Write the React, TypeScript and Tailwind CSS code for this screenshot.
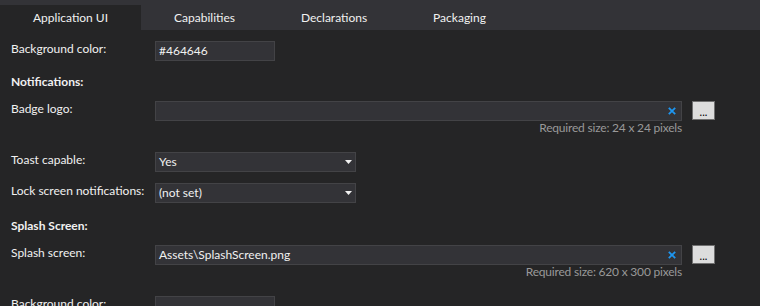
import React from 'react';

const tabs = ['Application UI', 'Capabilities', 'Declarations', 'Packaging'];

const ClearIcon = () => (
  <svg width="8" height="8" viewBox="0 0 8 8" className="shrink-0 mr-[1px]">
    <path d="M0.8 0.8 L7.2 7.2 M7.2 0.8 L0.8 7.2" stroke="#1e96f0" strokeWidth="1.8" />
  </svg>
);

const Caret = () => (
  <svg width="7" height="4" viewBox="0 0 7 4" className="shrink-0">
    <path d="M0 0 H7 L3.5 4 Z" fill="#f1f1f1" />
  </svg>
);

const Label: React.FC<{ children: React.ReactNode }> = ({ children }) => (
  <div className="w-[144px] shrink-0 leading-4">{children}</div>
);

const FileRow: React.FC<{ label: string; value?: string; hint: string }> = ({ label, value, hint }) => (
  <div className="flex flex-col">
    <div className="flex items-start">
      <Label>{label}</Label>
      <div className="flex items-center w-[527px] h-[20px] bg-[#333337] border border-[#434346] pl-[3px] pr-[4px]">
        <span className="flex-1 leading-4">{value}</span>
        <ClearIcon />
      </div>
      <button className="ml-[10px] w-[23px] h-[19px] bg-[#dddddd] border border-[#707070] text-black text-[11px] leading-[15px] flex items-end justify-center">
        ...
      </button>
    </div>
    <div className="w-[671px] text-right text-[#999999] leading-[14px] tracking-[-0.2px]">{hint}</div>
  </div>
);

const Select: React.FC<{ label: string; value: string }> = ({ label, value }) => (
  <div className="flex items-start">
    <Label>{label}</Label>
    <div className="flex items-center w-[201px] h-[20px] bg-[#333337] border border-[#434346] pl-[3px] pr-[3px]">
      <span className="flex-1 leading-4">{value}</span>
      <Caret />
    </div>
  </div>
);

export default function App() {
  return (
    <div
      className="w-[760px] h-[306px] overflow-hidden bg-[#252526] text-[#f1f1f1] text-[12px]"
      style={{ fontFamily: '"Lato", "Noto Sans", sans-serif' }}
    >
      <div className="flex items-end h-[30px] bg-[#333337]">
        {tabs.map((t, i) => (
          <div
            key={t}
            className={
              i === 0
                ? 'h-[25px] px-[33px] flex items-center bg-[#252526]'
                : 'h-[25px] px-[33px] flex items-center'
            }
          >
            {t}
          </div>
        ))}
      </div>

      <div className="flex flex-col pl-[11px] pt-[11px]">
        <div className="flex items-start">
          <Label>Background color:</Label>
          <div className="flex items-center w-[120px] h-[20px] bg-[#333337] border border-[#434346] pl-[3px]">
            <span className="leading-4">#464646</span>
          </div>
        </div>

        <div className="mt-[13px] font-bold leading-4">Notifications:</div>

        <div className="mt-[11px]">
          <FileRow label="Badge logo:" hint="Required size: 24 x 24 pixels" />
        </div>

        <div className="mt-[17px]">
          <Select label="Toast capable:" value="Yes" />
        </div>
        <div className="mt-[11px]">
          <Select label="Lock screen notifications:" value="(not set)" />
        </div>

        <div className="mt-[15px] font-bold leading-4">Splash Screen:</div>

        <div className="mt-[11px]">
          <FileRow label="Splash screen:" value="Assets\SplashScreen.png" hint="Required size: 620 x 300 pixels" />
        </div>

        <div className="mt-[17px] flex items-start">
          <Label>Background color:</Label>
          <div className="w-[120px] h-[20px] bg-[#333337] border border-[#434346]" />
        </div>
      </div>
    </div>
  );
}
